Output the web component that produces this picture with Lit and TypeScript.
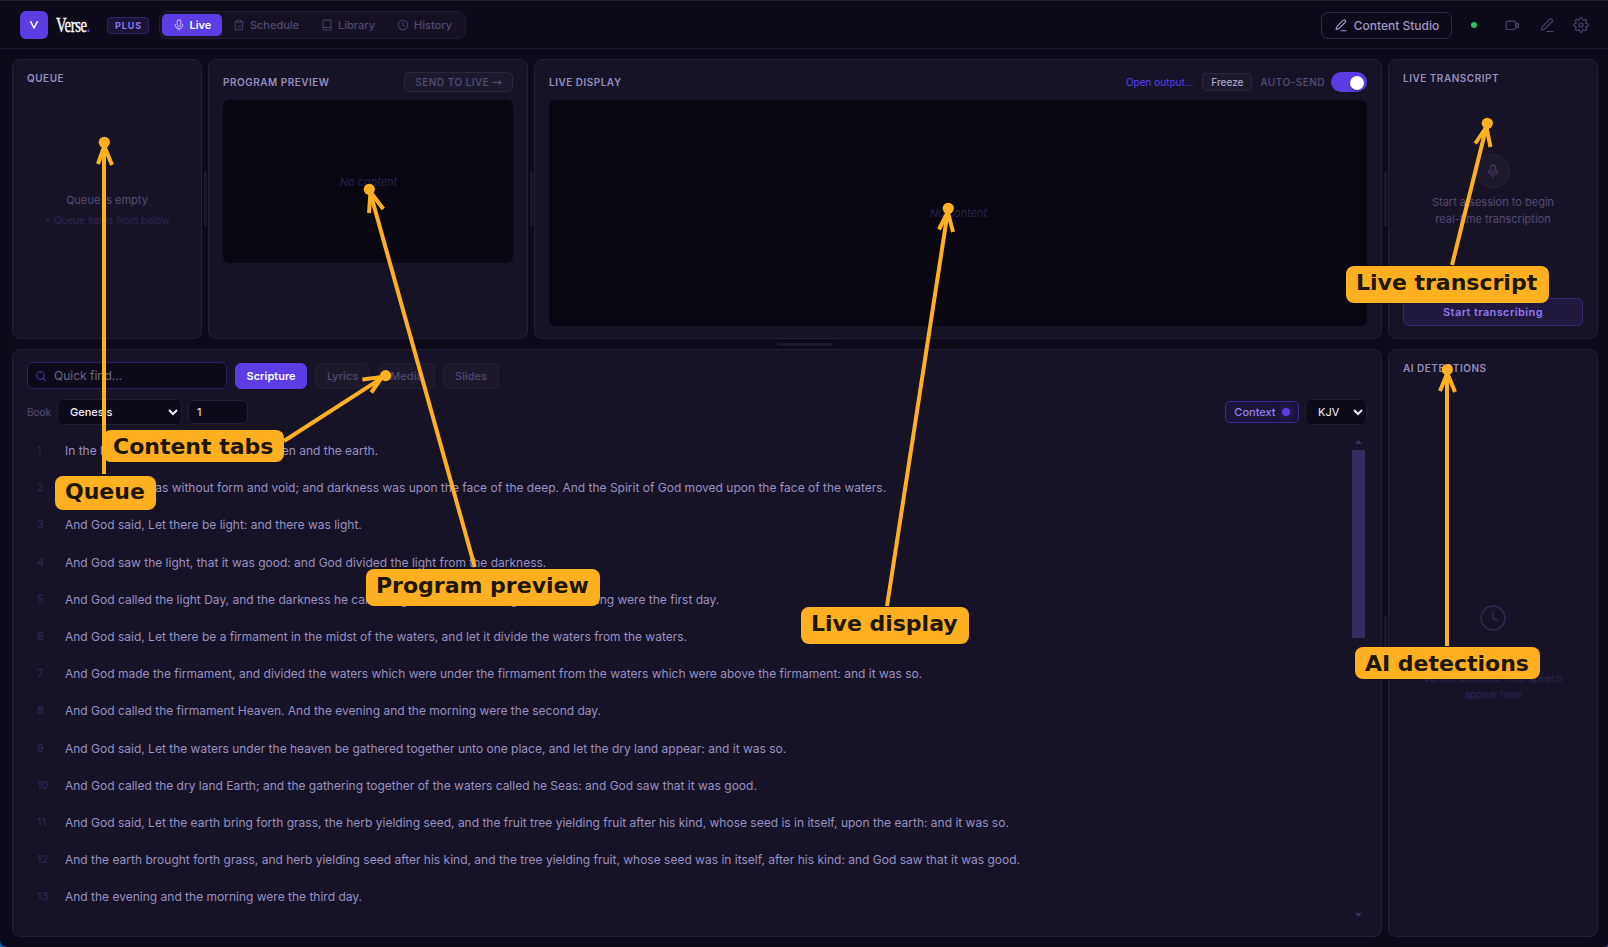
import { LitElement, html, css, svg } from "lit";
import { customElement } from "lit/decorators.js";

const VERSES = [
  "In the beginning God created the heaven and the earth.",
  "And the earth was without form and void; and darkness was upon the face of the deep. And the Spirit of God moved upon the face of the waters.",
  "And God said, Let there be light: and there was light.",
  "And God saw the light, that it was good: and God divided the light from the darkness.",
  "And God called the light Day, and the darkness he called Night. And the evening and the morning were the first day.",
  "And God said, Let there be a firmament in the midst of the waters, and let it divide the waters from the waters.",
  "And God made the firmament, and divided the waters which were under the firmament from the waters which were above the firmament: and it was so.",
  "And God called the firmament Heaven. And the evening and the morning were the second day.",
  "And God said, Let the waters under the heaven be gathered together unto one place, and let the dry land appear: and it was so.",
  "And God called the dry land Earth; and the gathering together of the waters called he Seas: and God saw that it was good.",
  "And God said, Let the earth bring forth grass, the herb yielding seed, and the fruit tree yielding fruit after his kind, whose seed is in itself, upon the earth: and it was so.",
  "And the earth brought forth grass, and herb yielding seed after his kind, and the tree yielding fruit, whose seed was in itself, after his kind: and God saw that it was good.",
  "And the evening and the morning were the third day.",
];

const pen = svg`<path d="M2.2 11.2l.8-3L10 1.3a1.3 1.3 0 0 1 1.9 0l.3.3a1.3 1.3 0 0 1 0 1.9L5.200 10.400z"/><path d="M7.500 12.600h5.500"/>`;
const mic = svg`<rect x="4.900" y="1" width="4.200" height="7.600" rx="2.100"/><path d="M2.600 6.200v.6a4.400 4.400 0 0 0 8.800 0v-.6M7 11.200v1.900"/>`;

const ARROWS = [
  { line: "M104 474V142", head: "M98 164L104.300 146L112 165", x: 104.3, y: 142.3 },
  { line: "M284 441L385.600 375.600", head: "M362.400 379.400L382 377L371.300 392.500", x: 385.6, y: 375.6 },
  { line: "M474.800 567L369.300 189.300", head: "M369 213L370.500 192L383.300 209", x: 369.3, y: 189.3 },
  { line: "M887 606L948.300 208.300", head: "M939 229.500L947.800 212L953 232", x: 948.3, y: 208.3 },
  { line: "M1452 265L1487.300 123.300", head: "M1475.300 143.500L1486.400 127L1490.500 147", x: 1487.3, y: 123.3 },
  { line: "M1447 646V369.500", head: "M1440 391L1447.300 373L1455 392", x: 1447.3, y: 369.5 },
];

@customElement("app-root")
export class AppRoot extends LitElement {
  static styles = css`
    :host { display: block; width: 1608px; height: 947px; background: #0b5a9e; font-family: Inter, sans-serif; font-size: 12px; color: #a49cc8; }
    * { box-sizing: border-box; }
    button, input, select { font: inherit; color: inherit; margin: 0; padding: 0; }
    svg { display: block; flex: none; fill: none; stroke: currentColor; stroke-linecap: round; stroke-linejoin: round; }
    .window { position: relative; height: 947px; background: #0d0a1a; border-top: 1px solid #1f1e22; border-radius: 0 0 4px 7px; overflow: hidden; display: flex; flex-direction: column; }
    .header { height: 48px; flex: none; padding: 1px 19px 0 20px; border-bottom: 1px solid #1f1b2e; display: flex; align-items: center; }
    .logo { width: 28px; height: 28px; border-radius: 6px; background: #5b3de3; display: grid; place-items: center; color: #fff; }
    .brand { width: 35px; margin-left: 8px; white-space: nowrap; }
    .brand span { display: inline-block; transform: scaleX(.7); transform-origin: 0 50%; font: 21px/26px "Liberation Serif", serif; color: #fff; -webkit-text-stroke: .4px #fff; letter-spacing: -.6px; }
    .brand i { font-style: normal; color: #5b3de3; -webkit-text-stroke: .4px #5b3de3; }
    .plus { margin-left: 16px; width: 42px; height: 17px; border: 1px solid #2f2266; border-radius: 4px; background: #1b1238; color: #8f78ee; font-size: 9px; font-weight: 700; letter-spacing: .9px; padding-left: 1px; display: grid; place-items: center; }
    .nav { margin-left: 10px; width: 307px; height: 28px; padding: 2px; border: 1px solid #221e31; border-radius: 8px; background: #151122; display: flex; }
    .tab { height: 22px; border: 0; border-radius: 5px; background: none; padding: 0 11px; display: flex; align-items: center; gap: 5px; font-size: 11px; font-weight: 500; color: #4f4870; white-space: nowrap; }
    .tab svg { color: #443d62; }
    .tab.on { width: 60px; padding: 0 0 0 10.500px; background: #5b3de3; color: #fff; font-weight: 600; }
    .tab.on svg { color: #b9abf7; }
    .space { flex: 1; }
    .studio { width: 131px; height: 27px; border: 1px solid #302b42; border-radius: 7px; background: none; color: #a098c4; font-weight: 500; display: flex; align-items: center; justify-content: center; gap: 7px; padding: 0; white-space: nowrap; }
    .online { width: 6px; height: 6px; border-radius: 50%; background: #2bc566; margin: 0 28px 0 19px; }
    .tools { display: flex; align-items: center; gap: 19px; color: #49426a; }
    .main { flex: 1; padding: 10px 10px 10px 12px; display: flex; flex-direction: column; min-height: 0; }
    .top { height: 280px; flex: none; display: flex; }
    .bottom { flex: 1; display: flex; min-height: 0; }
    .panel { border: 1px solid #242033; border-radius: 8px; background: #171326; display: flex; flex-direction: column; padding: 12px 14px; min-width: 0; }
    .w-queue { width: 190px; } .w-prog { width: 320px; } .w-side { width: 210px; } .grow { flex: 1; }
    .vsplit { width: 6px; display: grid; place-items: center; } .vsplit::before { content: ""; width: 3px; height: 56px; border-radius: 2px; background: #1c182a; }
    .hsplit { height: 10px; flex: none; display: grid; place-items: center; } .hsplit::before { content: ""; width: 56px; height: 3px; border-radius: 2px; background: #1c182a; }
    .title { font-size: 10px; line-height: 13px; font-weight: 600; letter-spacing: .5px; color: #958dbb; white-space: nowrap; }
    .head { height: 20px; flex: none; display: flex; align-items: center; justify-content: space-between; margin-bottom: 8px; }
    .send { width: 109px; height: 20px; border: 1px solid #2b2739; border-radius: 5px; background: #1d192c; color: #544d75; font-size: 10px; font-weight: 500; letter-spacing: .5px; white-space: nowrap; display: flex; align-items: center; justify-content: center; gap: 2.500px; }
    .send span { font: 12px/10px "DejaVu Sans", sans-serif; letter-spacing: 0; }
    .screen { border-radius: 6px; background: #090711; display: grid; place-items: center; color: #282250; font-style: italic; font-size: 11px; padding-left: 1px; }
    .screen.small { height: 163px; } .screen.large { flex: 1; }
    .controls { display: flex; align-items: center; }
    .open { color: #5a3ff0; font-size: 10px; margin-right: 9px; }
    .freeze { width: 50px; height: 18px; border: 1px solid #2b2739; border-radius: 4px; background: #1d192c; color: #a8a1ca; font-size: 10px; font-weight: 500; margin-right: 8px; }
    .auto { color: #544d75; font-size: 10px; font-weight: 500; letter-spacing: .5px; margin-right: 6px; white-space: nowrap; }
    .toggle { width: 36px; height: 20px; border-radius: 10px; background: #5b3de3; display: flex; justify-content: flex-end; padding: 4px 3px 2px; } .toggle::before { content: ""; width: 14px; height: 14px; border-radius: 50%; background: #fff; box-shadow: 0 1px 2px #0006; }
    .empty { flex: 1; display: flex; flex-direction: column; align-items: center; justify-content: center; text-align: center; white-space: nowrap; }
    .w-queue .empty { padding-top: 7px; }
    .queue-a { font-size: 11px; line-height: 18px; color: #544d75; } .queue-b { font-size: 10px; line-height: 16px; margin-top: 3px; color: #2e2653; }
    .listen { padding-bottom: 2px; }
    .mic { width: 34px; height: 34px; border: 1px solid #282437; border-radius: 50%; background: #1d192b; display: grid; place-items: center; color: #443b66; margin-bottom: 6px; }
    .hint { font-size: 11px; line-height: 17px; color: #514a72; }
    .start { height: 28px; flex: none; border: 1px solid #35256f; border-radius: 6px; background: #21183f; color: #9179f0; font-size: 11px; letter-spacing: .38px; font-weight: 600; }
    .detect { color: #2e2653; font-size: 10px; line-height: 16px; padding-top: 8px; }
    .detect svg { color: #30274f; margin-bottom: 39px; }
    .row1 { display: flex; gap: 8px; height: 27px; flex: none; align-items: flex-end; }
    .find { width: 200px; height: 27px; border: 1px solid #2d2066; border-radius: 6px; background: #0d0a1a; display: flex; align-items: center; padding-left: 8px; gap: 8px; color: #4a35a8; } .find span { color: #6b6780; font-size: 12px; }
    .chip { height: 26px; border: 1px solid #242033; border-radius: 6px; background: #1c182a; color: #4f4870; font-size: 11px; font-weight: 500; padding: 0; } .chip.on { border-color: #5b3de3; background: #5b3de3; color: #fff; font-weight: 600; }
    .c1 { width: 72px; } .c2 { width: 55px; } .c3 { width: 57px; } .c4 { width: 56px; }
    .row2 { display: flex; align-items: center; height: 26px; flex: none; margin-top: 10px; }
    .book { width: 30px; font-size: 10px; color: #544d75; }
    select { height: 26px; border: 1px solid #231f31; border-radius: 6px; background: #0d0a1a; color: #f2f0fa; font-size: 11px; font-weight: 500; padding: 0 8px; }
    .sel-book { width: 125px; } .sel-ver { width: 62px; font-weight: 400; }
    .chap { width: 60px; height: 24px; border: 1px solid #231f31; border-radius: 5px; background: #0d0a1a; color: #f2f0fa; font-size: 11px; margin-left: 6px; padding-left: 8px; }
    .context { width: 74px; height: 22px; border: 1px solid #39289a; border-radius: 5px; background: #1b1438; color: #9480ee; font-size: 11px; font-weight: 500; display: flex; align-items: center; justify-content: center; gap: 6px; margin-right: 6px; } .context::after { content: ""; width: 8px; height: 8px; border-radius: 50%; background: #5b3de3; box-shadow: 0 0 6px #5b3de380; }
    .list { flex: 1; min-height: 0; display: flex; margin-top: 7px; }
    .verses { flex: 1; display: flex; flex-direction: column; padding-top: .1px; }
    .verse { height: 37.200px; flex: none; display: grid; grid-template-columns: 28px 1fr; padding-left: 10px; line-height: 19.200px; align-items: center; white-space: nowrap; font-size: 12px; color: #9890c0; }
    .num { font-size: 11px; color: #30275a; }
    .bar { width: 13px; margin: 8px 2px 7px 0; display: flex; flex-direction: column; align-items: center; color: #362c5e; }
    .bar svg { fill: currentColor; stroke: none; } .thumb { width: 13px; height: 188px; background: #362c5e; margin-top: 6px; }
    .notes { position: absolute; left: 0; top: -1px; width: 1608px; height: 947px; }
    .label { position: absolute; background: #ffb020; color: #1e1600; border-radius: 8px; font: bold 22px/26px "DejaVu Sans", sans-serif; padding-left: 10px; white-space: nowrap; }
    .l-queue { left: 55px; top: 476px; width: 101px; height: 34px; padding-top: 3px; }
    .l-tabs { left: 103px; top: 430px; width: 181px; height: 32px; padding-top: 4px; }
    .l-prog { left: 366px; top: 569px; width: 234px; height: 37px; padding-top: 4px; }
    .l-live { left: 801px; top: 607px; width: 168px; height: 37px; padding-top: 4px; }
    .l-trans { left: 1346px; top: 266px; width: 203px; height: 37px; padding-top: 4px; }
    .l-ai { left: 1355px; top: 647px; width: 185px; height: 32px; padding-top: 4px; }
    .arrow { fill: none; stroke: #ffb020; stroke-width: 4; stroke-linecap: butt; stroke-linejoin: miter; } .dot { fill: #ffb020; stroke: none; }
  `;

  render() {
    return html`<div class="window">
      <header class="header">
        <div class="logo"><svg width="12" height="12" viewBox="0 0 12 12" stroke-width="1.500"><path d="M2.700 2.700L6 9l3.300-6.300"/></svg></div>
        <div class="brand"><span>Verse<i>.</i></span></div>
        <div class="plus">PLUS</div>
        <nav class="nav">
          <button class="tab on"><svg width="12" height="12" viewBox="0 0 14 14" stroke-width="1.300">${mic}</svg>Live</button>
          <button class="tab"><svg width="12" height="12" viewBox="0 0 14 14" stroke-width="1.200"><path d="M4.800 2.500H3.900A1.200 1.200 0 0 0 2.700 3.700v7.600a1.200 1.200 0 0 0 1.200 1.200h6.200a1.200 1.200 0 0 0 1.200-1.200V3.700a1.200 1.200 0 0 0-1.200-1.200h-.9M4.900 1.400h4.200v2.400H4.900zM7 9.300h1.300V7"/></svg>Schedule</button>
          <button class="tab"><svg width="12" height="12" viewBox="0 0 14 14" stroke-width="1.200"><path d="M2.400 11.400V2.700A1.400 1.400 0 0 1 3.800 1.300h7.800v11.500H3.800a1.400 1.400 0 0 1 0-2.900h7.800"/></svg>Library</button>
          <button class="tab"><svg width="12" height="12" viewBox="0 0 14 14" stroke-width="1.200"><circle cx="7" cy="7" r="5.500"/><path d="M7 3.800V7l1.800 1.400"/></svg>History</button>
        </nav>
        <div class="space"></div>
        <button class="studio"><svg width="13" height="13" viewBox="0 0 14 14" stroke-width="1.200">${pen}</svg>Content Studio</button>
        <div class="online"></div>
        <div class="tools">
          <svg width="15" height="15" viewBox="0 0 15 15" stroke-width="1.200"><rect x="1.200" y="3.200" width="9.600" height="8.300" rx="1.800"/><path d="M10.800 6l2.500-.8v4.600l-2.500-.8z"/></svg>
          <svg width="15" height="15" viewBox="0 0 14 14" stroke-width="1.100">${pen}</svg>
          <svg width="16" height="16" viewBox="0 0 24 24" stroke-width="1.700"><circle cx="12" cy="12" r="3"/><path d="M19.400 15a1.650 1.650 0 0 0 .33 1.820l.06.06a2 2 0 1 1-2.830 2.830l-.06-.06a1.650 1.650 0 0 0-2.800 1.170V21a2 2 0 1 1-4 0v-.09a1.650 1.650 0 0 0-2.900-1.260l-.06.06a2 2 0 1 1-2.830-2.830l.06-.06A1.650 1.650 0 0 0 3.100 14H3a2 2 0 1 1 0-4h.09a1.650 1.650 0 0 0 1.260-2.900l-.06-.06a2 2 0 1 1 2.830-2.830l.06.06A1.650 1.650 0 0 0 10 3.100V3a2 2 0 1 1 4 0v.09a1.650 1.650 0 0 0 2.820 1.180l.06-.06a2 2 0 1 1 2.830 2.830l-.06.06A1.650 1.650 0 0 0 20.900 10H21a2 2 0 1 1 0 4h-.09a1.650 1.650 0 0 0-1.510 1z"/></svg>
        </div>
      </header>
      <main class="main">
        <div class="top">
          <section class="panel w-queue"><div class="title">QUEUE</div><div class="empty"><div class="queue-a">Queue is empty</div><div class="queue-b">+ Queue items from below</div></div></section>
          <div class="vsplit"></div>
          <section class="panel w-prog"><div class="head"><div class="title">PROGRAM PREVIEW</div><button class="send">SEND TO LIVE <span>→</span></button></div><div class="screen small">No content</div></section>
          <div class="vsplit"></div>
          <section class="panel grow"><div class="head"><div class="title">LIVE DISPLAY</div><div class="controls"><span class="open">Open output...</span><button class="freeze">Freeze</button><span class="auto">AUTO-SEND</span><div class="toggle"></div></div></div><div class="screen large">No content</div></section>
          <div class="vsplit"></div>
          <section class="panel w-side"><div class="title">LIVE TRANSCRIPT</div><div class="empty listen"><div class="mic"><svg width="14" height="14" viewBox="0 0 14 14" stroke-width="1.300">${mic}</svg></div><div class="hint">Start a session to begin<br>real-time transcription</div></div><button class="start">Start transcribing</button></section>
        </div>
        <div class="hsplit"></div>
        <div class="bottom">
          <section class="panel grow">
            <div class="row1"><div class="find"><svg width="10" height="10" viewBox="0 0 10 10" stroke-width="1.100"><circle cx="4.500" cy="4.500" r="3.700"/><path d="M7.300 7.300L9.300 9.300"/></svg><span>Quick find...</span></div><button class="chip c1 on">Scripture</button><button class="chip c2">Lyrics</button><button class="chip c3">Media</button><button class="chip c4">Slides</button></div>
            <div class="row2"><span class="book">Book</span><select class="sel-book"><option>Genesis</option></select><input class="chap" .value=${"1"}><div class="space"></div><button class="context">Context</button><select class="sel-ver"><option>KJV</option></select></div>
            <div class="list"><div class="verses">${VERSES.map((v, i) => html`<div class="verse"><span class="num">${i + 1}</span><span>${v}</span></div>`)}</div>
              <div class="bar"><svg width="7" height="4"><path d="M3.500 0L7 4H0z"/></svg><div class="thumb"></div><div class="space"></div><svg width="7" height="4"><path d="M0 0H7L3.500 4z"/></svg></div></div>
          </section>
          <div class="vsplit"></div>
          <section class="panel w-side"><div class="title">AI DETECTIONS</div><div class="empty detect"><svg width="26" height="26" viewBox="0 0 26 26" stroke-width="1.600"><circle cx="13" cy="13" r="11.900"/><path d="M13 6v7.500l5 2.300"/></svg><div>Verses detected from speech<br>appear here</div></div></section>
        </div>
      </main>
      <div class="notes">
        <svg width="1608" height="947">${ARROWS.map((a) => svg`<path class="arrow" d=${a.line}/><path class="arrow" d=${a.head}/><circle class="dot" cx=${a.x} cy=${a.y} r="5.600"/>`)}</svg>
        <div class="label l-queue">Queue</div><div class="label l-tabs">Content tabs</div><div class="label l-prog">Program preview</div><div class="label l-live">Live display</div><div class="label l-trans">Live transcript</div><div class="label l-ai">AI detections</div>
      </div>
    </div>`;
  }
}
